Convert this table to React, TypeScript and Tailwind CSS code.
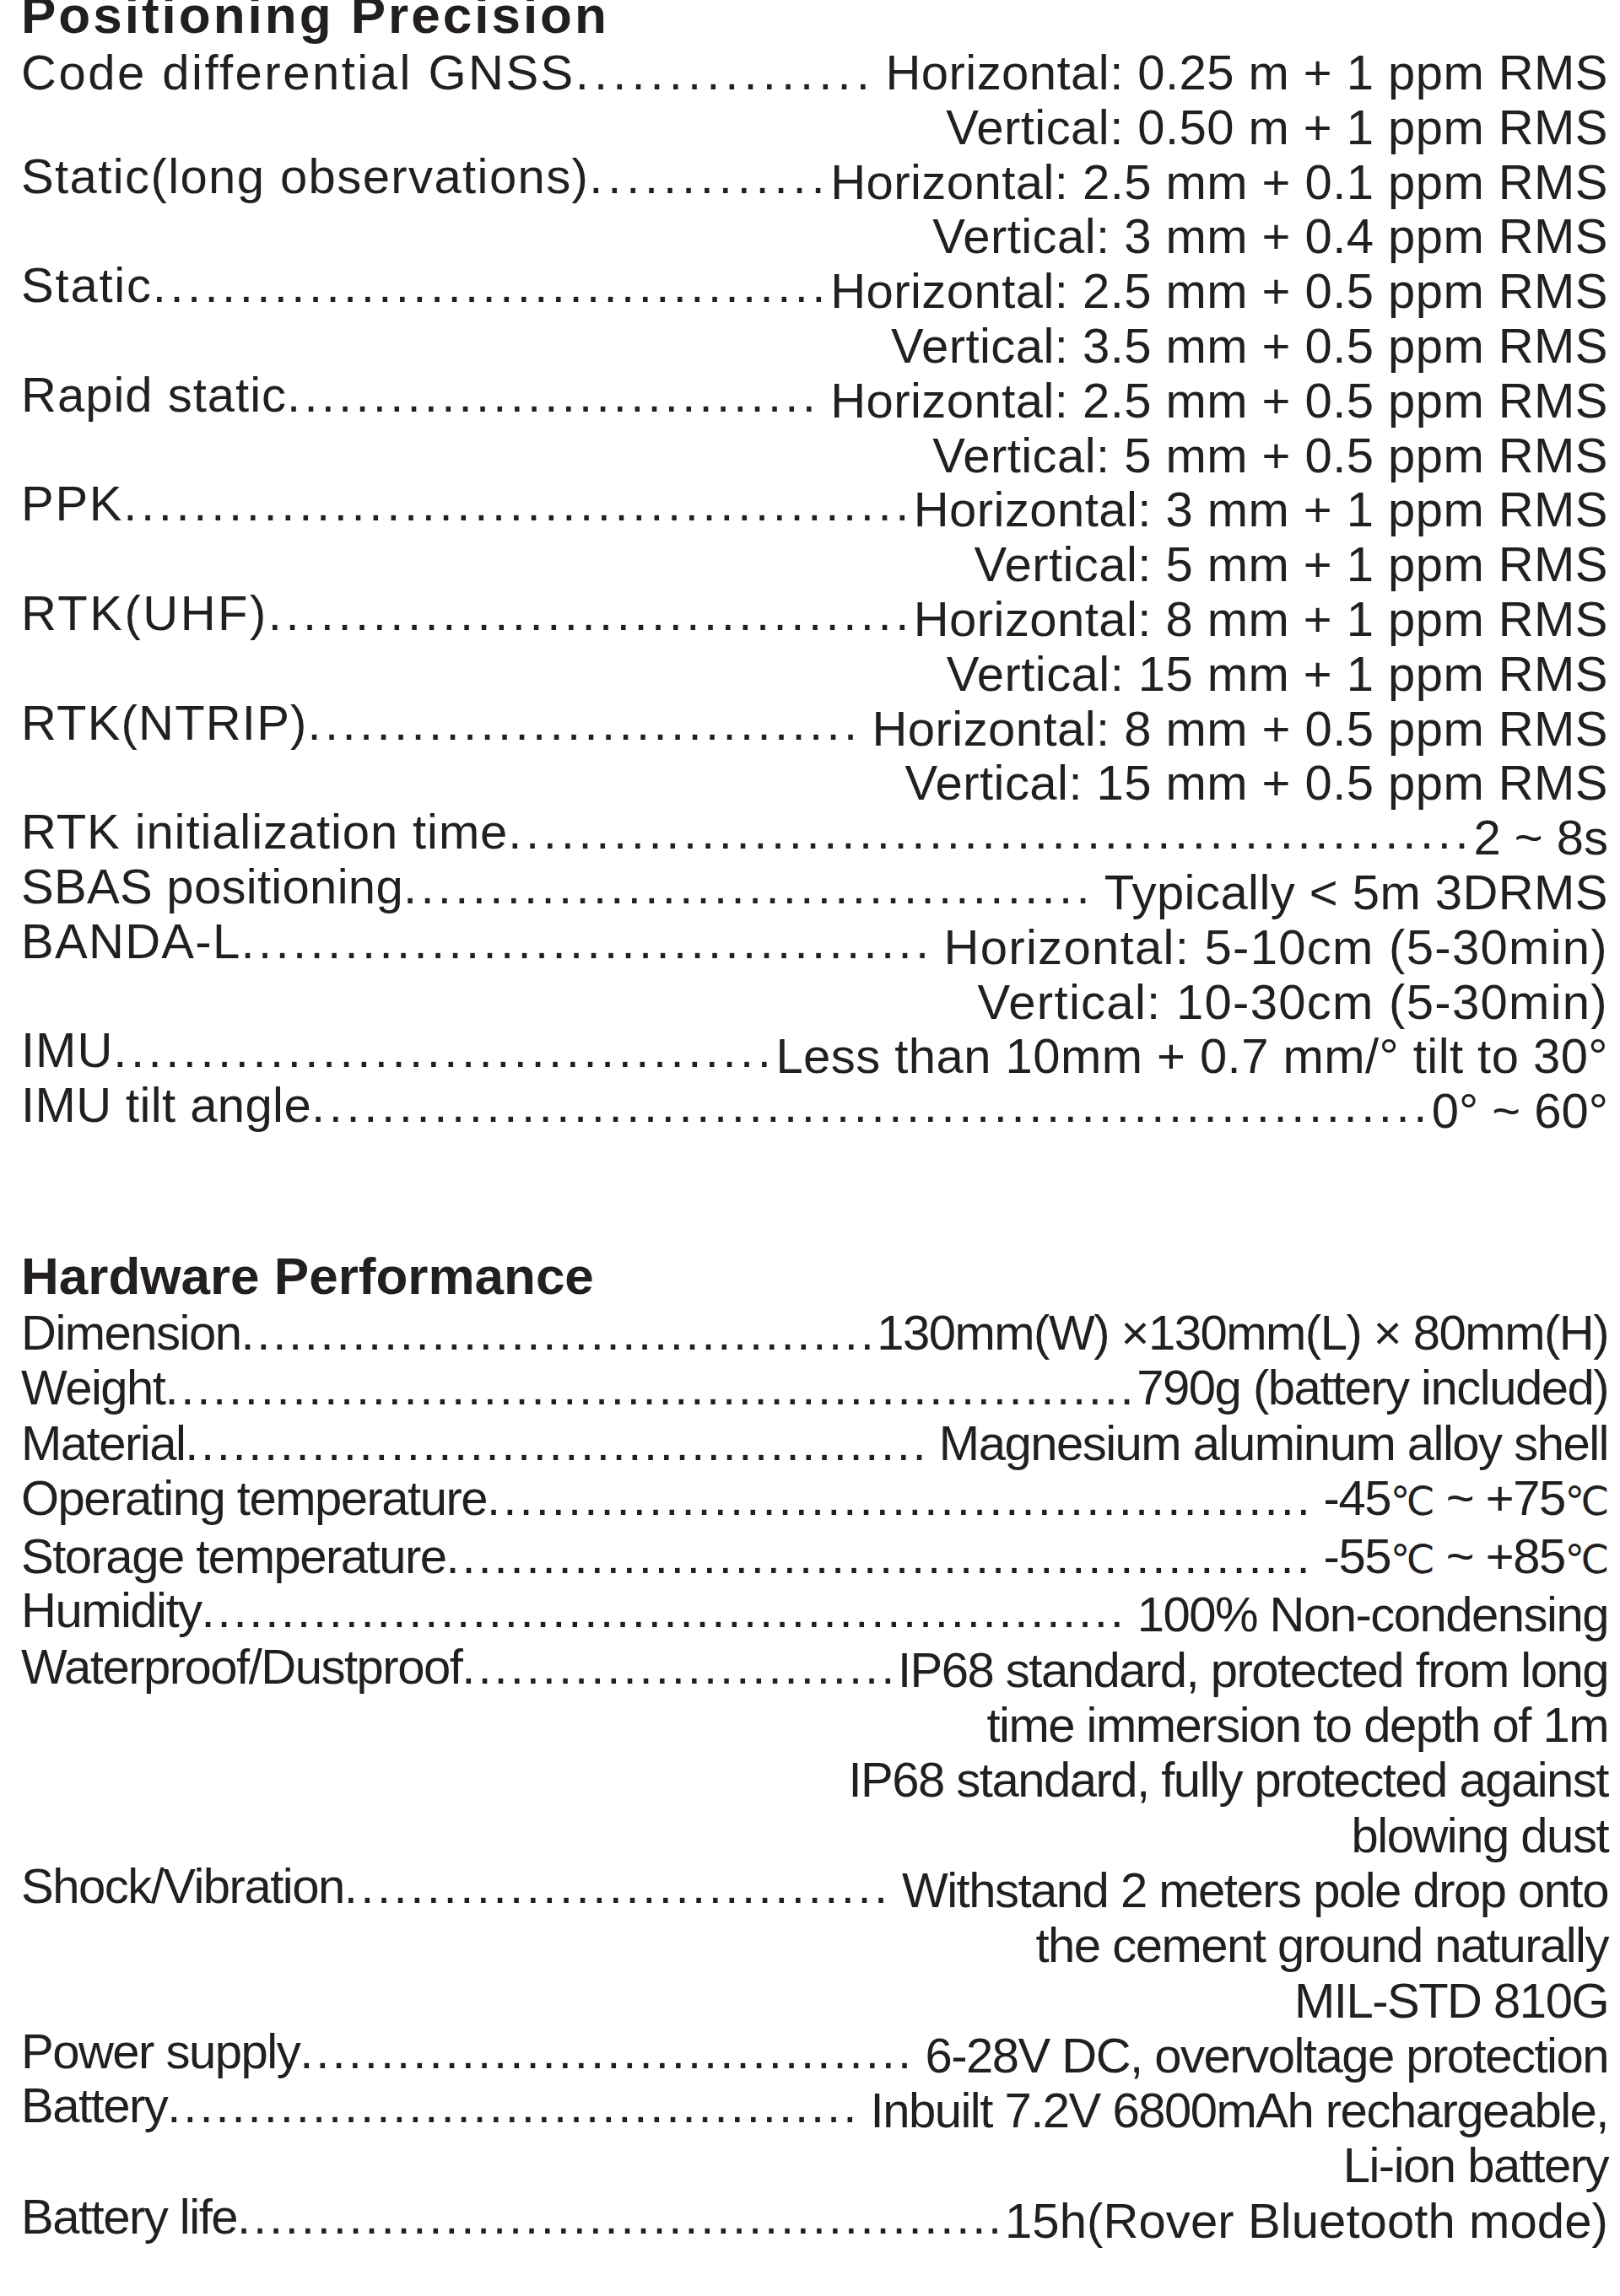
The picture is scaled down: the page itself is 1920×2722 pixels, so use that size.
import { useLayoutEffect, useRef, useState } from 'react';
import clsx from 'clsx';

type Spec = {
  label: string;
  lines: string[];
  // tracking for the label text (the scan has uneven letter spacing)
  track?: string;
  // tracking for the value lines, when it differs from the section's
  vtrack?: string;
  // labels in the scan sit a few px above their values
  lift?: string;
  // a visible space between the leader dots and the value
  gap?: boolean;
};

const PRECISION: Spec[] = [
  {
    label: 'Code differential GNSS',
    lines: ['Horizontal: 0.25 m + 1 ppm RMS', 'Vertical: 0.50 m + 1 ppm RMS'],
    track: 'tracking-[2.5px]',
    gap: true,
  },
  {
    label: 'Static(long observations)',
    lines: ['Horizontal: 2.5 mm + 0.1 ppm RMS', 'Vertical: 3 mm + 0.4 ppm RMS'],
    track: 'tracking-[1.4px]',
    lift: '-mt-[7px]',
  },
  {
    label: 'Static',
    lines: ['Horizontal: 2.5 mm + 0.5 ppm RMS', 'Vertical: 3.5 mm + 0.5 ppm RMS'],
    track: 'tracking-[1.8px]',
    lift: '-mt-[7px]',
  },
  {
    label: 'Rapid static',
    lines: ['Horizontal: 2.5 mm + 0.5 ppm RMS', 'Vertical: 5 mm + 0.5 ppm RMS'],
    track: 'tracking-[1px]',
    lift: '-mt-[7px]',
    gap: true,
  },
  {
    label: 'PPK',
    lines: ['Horizontal: 3 mm + 1 ppm RMS', 'Vertical: 5 mm + 1 ppm RMS'],
    track: 'tracking-[1.7px]',
    lift: '-mt-[7px]',
  },
  {
    label: 'RTK(UHF)',
    lines: ['Horizontal: 8 mm + 1 ppm RMS', 'Vertical: 15 mm + 1 ppm RMS'],
    track: 'tracking-[2.5px]',
    lift: '-mt-[7px]',
  },
  {
    label: 'RTK(NTRIP)',
    lines: ['Horizontal: 8 mm + 0.5 ppm RMS', 'Vertical: 15 mm + 0.5 ppm RMS'],
    track: 'tracking-[1.2px]',
    lift: '-mt-[7px]',
    gap: true,
  },
  {
    label: 'RTK initialization time',
    lines: ['2 ~ 8s'],
    track: 'tracking-[0.9px]',
    vtrack: 'tracking-normal',
    lift: '-mt-[7px]',
  },
  {
    label: 'SBAS positioning',
    lines: ['Typically < 5m 3DRMS'],
    track: 'tracking-[0.3px]',
    lift: '-mt-[7px]',
    gap: true,
  },
  {
    label: 'BANDA-L',
    lines: ['Horizontal: 5-10cm (5-30min)', 'Vertical: 10-30cm (5-30min)'],
    track: 'tracking-[1.3px]',
    vtrack: 'tracking-[1.3px]',
    lift: '-mt-[7px]',
    gap: true,
  },
  { label: 'IMU', lines: ['Less than 10mm + 0.7 mm/° tilt to 30°'], track: 'tracking-[1px]', lift: '-mt-[7px]' },
  {
    label: 'IMU tilt angle',
    lines: ['0° ~ 60°'],
    track: 'tracking-[0.4px]',
    vtrack: 'tracking-normal',
    lift: '-mt-[7px]',
  },
];

const HARDWARE: Spec[] = [
  { label: 'Dimension', lines: ['130mm(W) ×130mm(L) × 80mm(H)'] },
  { label: 'Weight', lines: ['790g (battery included)'] },
  { label: 'Material', lines: ['Magnesium aluminum alloy shell'], gap: true },
  { label: 'Operating temperature', lines: ['-45℃ ~ +75℃'], gap: true },
  { label: 'Storage temperature', lines: ['-55℃ ~ +85℃'], gap: true },
  { label: 'Humidity', lines: ['100% Non-condensing'], lift: '-mt-[5px]', gap: true },
  {
    label: 'Waterproof/Dustproof',
    lines: [
      'IP68 standard, protected from long',
      'time immersion to depth of 1m',
      'IP68 standard, fully protected against',
      'blowing dust',
    ],
    lift: '-mt-[4px]',
  },
  {
    label: 'Shock/Vibration',
    lines: ['Withstand 2 meters pole drop onto', 'the cement ground naturally', 'MIL-STD 810G'],
    lift: '-mt-[5px]',
    gap: true,
  },
  { label: 'Power supply', lines: ['6-28V DC, overvoltage protection'], lift: '-mt-[5px]', gap: true },
  { label: 'Battery', lines: ['Inbuilt 7.2V 6800mAh rechargeable,', 'Li-ion battery'], lift: '-mt-[6px]', gap: true },
  { label: 'Battery life', lines: ['15h(Rover Bluetooth mode)'], vtrack: 'tracking-[0.1px]', lift: '-mt-[5px]' },
];

// Liberation Sans period advance, in em
const DOT_EM = 569 / 2048;

// Dot leader: as many dots as fit, spread so they run from label to value
function Leader({ className }: { className?: string }) {
  const ref = useRef<HTMLSpanElement>(null);
  const [fill, setFill] = useState<{ count: number; spacing?: number }>({ count: 0 });

  useLayoutEffect(() => {
    const measure = () => {
      const el = ref.current;
      if (!el) return;
      const cs = getComputedStyle(el);
      const base = parseFloat(cs.letterSpacing) || 0;
      const advance = parseFloat(cs.fontSize) * DOT_EM + base;
      const w = el.clientWidth - parseFloat(cs.paddingLeft) - parseFloat(cs.paddingRight) - 1;
      const count = Math.max(0, Math.floor(w / advance));
      if (!count) return setFill({ count: 0 });
      setFill({ count, spacing: base + (w - count * advance) / count });
    };
    measure();
    document.fonts?.ready.then(measure);
  }, []);

  return (
    <span
      ref={ref}
      className={clsx('min-w-0 flex-1 overflow-hidden whitespace-nowrap', className)}
      style={fill.spacing !== undefined ? { letterSpacing: fill.spacing } : undefined}
    >
      {'.'.repeat(fill.count)}
    </span>
  );
}

// the scan's ℃ is narrower than the fallback glyph
function Value({ text }: { text: string }) {
  const parts = text.split('℃');
  return (
    <>
      {parts.map((p, i) => (
        <span key={i}>
          {p}
          {i < parts.length - 1 && <span className="text-[47px]">℃</span>}
        </span>
      ))}
    </>
  );
}

function SpecRow({ spec, dots, vtrack }: { spec: Spec; dots: string; vtrack: string }) {
  const [first, ...rest] = spec.lines;
  const valueTrack = spec.vtrack ?? vtrack;
  return (
    <>
      <div className="flex">
        <div className={clsx('flex min-w-0 flex-1', spec.lift)}>
          <span className={clsx('shrink-0 whitespace-nowrap', spec.track)}>{spec.label}</span>
          <Leader className={clsx(dots, spec.gap ? 'pr-[12px]' : 'pr-0')} />
        </div>
        <span className={clsx('shrink-0 whitespace-nowrap', valueTrack)}>
          <Value text={first} />
        </span>
      </div>
      {rest.map(line => (
        <div key={line} className={clsx('whitespace-nowrap text-right', valueTrack)}>
          {line}
        </div>
      ))}
    </>
  );
}

export default function App() {
  return (
    <div
      className="min-h-[2722px] overflow-hidden bg-white pl-[25px] pr-[14px] text-[#231f20]"
      style={{ fontFamily: '"Liberation Sans", Arial, "DejaVu Sans", sans-serif' }}
    >
      {/* Positioning Precision — heading is cropped at the top of the scan */}
      <h2 className="-mt-[15px] text-[62px] leading-[65px] font-bold tracking-[3px]">Positioning Precision</h2>
      <div className="mt-[4px] text-[58px] leading-[64.8px]">
        {PRECISION.map(s => (
          <SpecRow key={s.label} spec={s} dots="tracking-[4px]" vtrack="tracking-[0.45px]" />
        ))}
      </div>

      {/* Hardware Performance */}
      <h2 className="mt-[130px] text-[62px] leading-[65px] font-bold">Hardware Performance</h2>
      <div className="mt-[2px] text-[58px] leading-[65.3px] tracking-[-1.5px]">
        {HARDWARE.map(s => (
          <SpecRow key={s.label} spec={s} dots="tracking-[2.5px]" vtrack="tracking-[-1.5px]" />
        ))}
      </div>
    </div>
  );
}
